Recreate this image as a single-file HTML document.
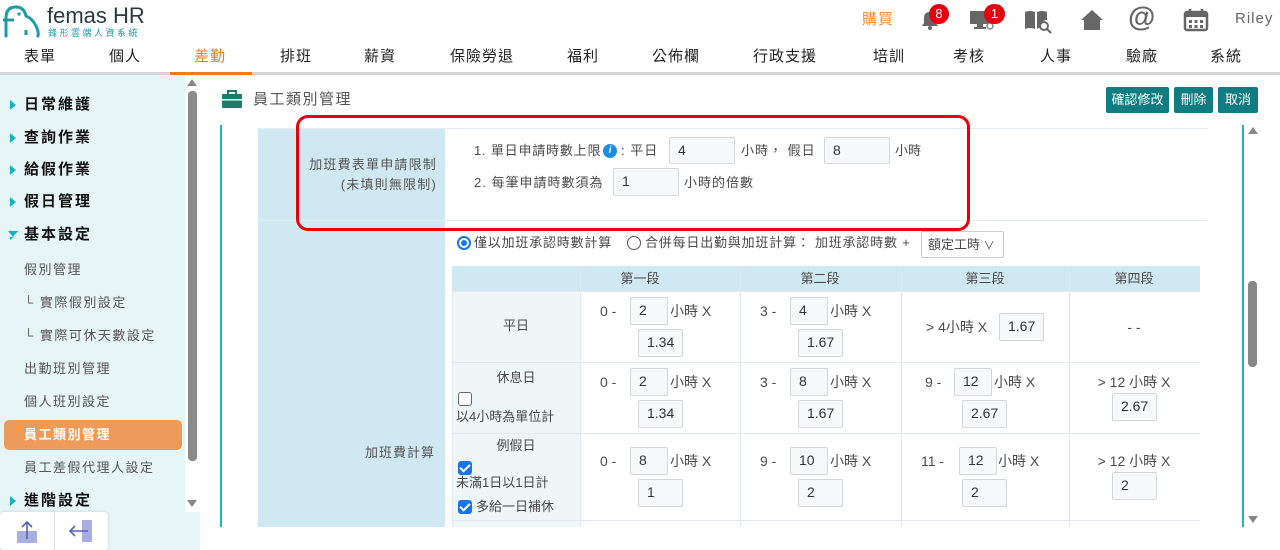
<!DOCTYPE html>
<html><head><meta charset="utf-8">
<style>
*{box-sizing:border-box;margin:0;padding:0}
body{width:1280px;height:550px;overflow:hidden;background:#fff;font-family:"Liberation Sans","Noto Sans CJK TC",sans-serif;color:#4a4a4a;position:relative;font-size:14px}
.a{position:absolute;white-space:nowrap;line-height:18px}
.nav{position:absolute;top:47px;font-size:15px;color:#222;letter-spacing:1px;transform:translateX(-50%);line-height:20px}
.sb{position:absolute;left:24px;font-size:15px;color:#111;letter-spacing:2px;font-weight:bold;line-height:20px}
.sb:before{content:"";position:absolute;left:-14px;top:5px;border-left:6px solid #1ab0c0;border-top:5px solid transparent;border-bottom:5px solid transparent}
.ss{position:absolute;left:24px;font-size:13px;color:#555;letter-spacing:1.5px;line-height:18px}
.in{position:absolute;background:#f7f8fa;border:1px solid #d3d6da;border-radius:2px;font-size:14px;color:#333;padding-left:8px;line-height:25px}
.btn{position:absolute;top:87px;height:26px;background:#0e7c80;color:#fff;font-size:13px;line-height:26px;text-align:center;border-radius:2px}
.cb{position:absolute;width:14px;height:14px;border-radius:3px}
.cb.on{background:#1a73e8}
.cb.on:after{content:"";position:absolute;left:4px;top:1px;width:4px;height:8px;border:solid #fff;border-width:0 2px 2px 0;transform:rotate(45deg)}
.cb.off{border:1.5px solid #666;background:#fff}
</style></head><body>
<!-- logo -->
<svg class="a" style="left:2px;top:4px" width="40" height="34" viewBox="0 0 40 34"><path d="M4 32 V14 Q4 3 14 3 Q22 3 24 12 Q30 14 34 22 Q37 28 36 32" fill="none" stroke="#1f9aa8" stroke-width="3" stroke-linecap="round"/><path d="M1 16 H12" stroke="#1f9aa8" stroke-width="3"/><circle cx="17" cy="10" r="1.6" fill="#1f9aa8"/><path d="M24 26 v5" stroke="#1f9aa8" stroke-width="3"/></svg>
<div class="a" style="left:47px;top:4px;font-size:22px;line-height:24px;color:#2a3a40;letter-spacing:0">femas HR</div>
<div class="a" style="left:48px;top:28px;font-size:9px;line-height:10px;color:#1f9aa8;letter-spacing:2.5px">鋒形雲端人資系統</div>
<!-- top icons -->
<div class="a" style="left:862px;top:11px;font-size:15px;color:#f08a2e;letter-spacing:1px">購買</div>
<svg class="a" style="left:918px;top:8px" width="24" height="24" viewBox="0 0 24 24"><path d="M4 18 H20 L18 15 V10 Q18 4 12 4 Q6 4 6 10 V15 Z" fill="#666"/><circle cx="12" cy="20" r="2" fill="#666"/></svg>
<div class="a" style="left:929px;top:4px;width:20px;height:20px;border-radius:10px;background:#e4000f;color:#fff;font-size:13px;text-align:center;line-height:20px">8</div>
<svg class="a" style="left:968px;top:8px" width="30" height="24" viewBox="0 0 30 24"><rect x="2" y="3" width="20" height="13" rx="1" fill="#666"/><rect x="9" y="16" width="6" height="4" fill="#666"/><rect x="6" y="19" width="12" height="2" fill="#666"/><circle cx="22" cy="18" r="3" fill="none" stroke="#888" stroke-width="1.5"/></svg>
<div class="a" style="left:984px;top:4px;width:21px;height:20px;border-radius:10px;background:#e4000f;color:#fff;font-size:13px;text-align:center;line-height:20px">1</div>
<svg class="a" style="left:1023px;top:8px" width="30" height="26" viewBox="0 0 30 26"><path d="M2 4 Q7 2 12 4 V21 Q7 19 2 21 Z M14 4 Q19 2 24 4 V12 Q18 12 17 19 L14 21 Z" fill="#666"/><circle cx="21" cy="18" r="4" fill="none" stroke="#666" stroke-width="2"/><path d="M24 21 L28 25" stroke="#666" stroke-width="2"/></svg>
<svg class="a" style="left:1079px;top:8px" width="26" height="24" viewBox="0 0 26 24"><path d="M13 2 L24 12 H21 V22 H5 V12 H2 Z" fill="#666"/></svg>
<div class="a" style="left:1128px;top:2px;font-size:28px;line-height:30px;color:#666;font-weight:bold">@</div>
<svg class="a" style="left:1183px;top:8px" width="26" height="24" viewBox="0 0 26 24"><rect x="2" y="4" width="22" height="18" rx="2" fill="none" stroke="#666" stroke-width="2.5"/><rect x="2" y="4" width="22" height="5" fill="#666"/><path d="M7 1v5M19 1v5" stroke="#666" stroke-width="2.5"/><g fill="#666"><rect x="6" y="12" width="3" height="3"/><rect x="11.5" y="12" width="3" height="3"/><rect x="17" y="12" width="3" height="3"/><rect x="6" y="17" width="3" height="3"/><rect x="11.5" y="17" width="3" height="3"/><rect x="17" y="17" width="3" height="3"/></g></svg>
<div class="a" style="left:1235px;top:10px;font-size:15px;color:#666;letter-spacing:1px">Riley</div>
<!-- nav -->
<div class="nav" style="left:40px">表單</div><div class="nav" style="left:125px">個人</div>
<div class="nav" style="left:210px;color:#f07a22">差勤</div><div class="nav" style="left:296px">排班</div>
<div class="nav" style="left:380px">薪資</div><div class="nav" style="left:482px">保險勞退</div>
<div class="nav" style="left:583px">福利</div><div class="nav" style="left:676px">公佈欄</div>
<div class="nav" style="left:785px">行政支援</div><div class="nav" style="left:889px">培訓</div>
<div class="nav" style="left:969px">考核</div><div class="nav" style="left:1056px">人事</div>
<div class="nav" style="left:1142px">驗廠</div><div class="nav" style="left:1226px">系統</div>
<div class="a" style="left:0;top:72px;width:1280px;height:3px;background:#d4d4d4"></div>
<div class="a" style="left:170px;top:72px;width:82px;height:3px;background:#f07a22"></div>
<!-- sidebar -->
<div class="a" style="left:0;top:75px;width:200px;height:475px;background:#e6f5f6"></div>
<div class="a" style="left:185px;top:75px;width:15px;height:437px;background:#fff"></div>
<div class="a" style="left:188px;top:91px;width:9px;height:370px;background:#8a8a8a;border-radius:4px"></div>
<div class="a" style="left:187px;top:79px;border-bottom:7px solid #888;border-left:5px solid transparent;border-right:5px solid transparent"></div>
<div class="a" style="left:187px;top:500px;border-top:7px solid #888;border-left:5px solid transparent;border-right:5px solid transparent"></div>
<div class="sb" style="top:95px">日常維護</div><div class="sb" style="top:128px">查詢作業</div>
<div class="sb" style="top:160px">給假作業</div><div class="sb" style="top:192px">假日管理</div>
<div class="sb" style="top:225px">基本設定</div>
<div class="a" style="left:8px;top:231px;border-top:6px solid #1ab0c0;border-left:5px solid transparent;border-right:5px solid transparent;z-index:2;background:#e6f5f6"></div>
<div class="ss" style="top:261px">假別管理</div><div class="ss" style="top:294px">└ 實際假別設定</div>
<div class="ss" style="top:327px">└ 實際可休天數設定</div><div class="ss" style="top:360px">出勤班別管理</div>
<div class="ss" style="top:393px">個人班別設定</div>
<div class="a" style="left:4px;top:420px;width:178px;height:30px;background:#ec9c58;border-radius:5px"></div>
<div class="ss" style="top:426px;color:#fff;font-weight:bold">員工類別管理</div>
<div class="ss" style="top:459px">員工差假代理人設定</div>
<div class="sb" style="top:491px">進階設定</div>
<div class="a" style="left:0;top:512px;width:108px;height:38px;background:#fff;border-radius:4px;box-shadow:0 0 3px rgba(0,0,0,.15)"></div>
<div class="a" style="left:54px;top:512px;width:1px;height:38px;background:#ddd"></div>
<svg class="a" style="left:16px;top:519px" width="24" height="26" viewBox="0 0 24 26"><rect x="1" y="12" width="20" height="12" fill="#a9aee0"/><path d="M11 20 V3 M6 8 L11 3 L16 8" stroke="#5560c8" stroke-width="1.6" fill="none"/></svg>
<svg class="a" style="left:68px;top:519px" width="26" height="24" viewBox="0 0 26 24"><rect x="14" y="1" width="10" height="22" fill="#a9aee0"/><path d="M2 12 H20 M7 7 L2 12 L7 17" stroke="#5560c8" stroke-width="1.6" fill="none"/></svg>
<!-- title -->
<svg class="a" style="left:222px;top:90px" width="20" height="18" viewBox="0 0 20 18"><rect x="0" y="4" width="20" height="14" rx="1" fill="#1c7c6a"/><rect x="6" y="1" width="8" height="4" fill="none" stroke="#1c7c6a" stroke-width="2"/><rect x="0" y="9" width="20" height="1.5" fill="#fff"/></svg>
<div class="a" style="left:253px;top:91px;font-size:15px;color:#555;letter-spacing:1.5px">員工類別管理</div>
<div class="btn" style="left:1106px;width:63px">確認修改</div>
<div class="btn" style="left:1174px;width:39px">刪除</div>
<div class="btn" style="left:1218px;width:40px">取消</div>
<!-- frame -->
<div class="a" style="left:220px;top:125px;width:2px;height:402px;background:#1bb6c4"></div>
<div class="a" style="left:1242px;top:125px;width:2px;height:402px;background:#1bb6c4"></div>
<div class="a" style="left:1248px;top:281px;width:9px;height:86px;background:#888;border-radius:4px"></div>
<div class="a" style="left:1248px;top:127px;border-bottom:7px solid #888;border-left:5px solid transparent;border-right:5px solid transparent"></div>
<div class="a" style="left:1248px;top:516px;border-top:7px solid #888;border-left:5px solid transparent;border-right:5px solid transparent"></div>
<div class="a" style="left:258px;top:128px;width:187px;height:399px;background:#cfe8f1"></div>
<div class="a" style="left:258px;top:220px;width:950px;height:1px;background:#e4eef2"></div>
<div class="a" style="left:258px;top:128px;width:950px;height:1px;background:#e4eef2"></div>
<div class="a" style="right:843px;top:155px;font-size:13px;color:#555;text-align:right;line-height:20px;letter-spacing:1.2px">加班費表單申請限制<br>(未填則無限制)</div>
<div class="a" style="left:474px;top:142px;font-size:13px;letter-spacing:.8px">1. 單日申請時數上限</div>
<div class="a" style="left:603px;top:144px;width:14px;height:14px;border-radius:7px;background:#1a8fe0;color:#fff;font-size:10px;line-height:14px;text-align:center;font-style:italic;font-weight:bold">i</div>
<div class="a" style="left:621px;top:142px;font-size:13px;letter-spacing:1px">: 平日</div>
<div class="in" style="left:669px;top:137px;width:66px;height:27px">4</div>
<div class="a" style="left:741px;top:142px;font-size:13px;letter-spacing:1px">小時， 假日</div>
<div class="in" style="left:824px;top:137px;width:66px;height:27px">8</div>
<div class="a" style="left:895px;top:142px;font-size:13px">小時</div>
<div class="a" style="left:474px;top:174px;font-size:13px;letter-spacing:1px">2. 每筆申請時數須為</div>
<div class="in" style="left:613px;top:168px;width:66px;height:28px">1</div>
<div class="a" style="left:684px;top:174px;font-size:13px;letter-spacing:1px">小時的倍數</div>
<div class="a" style="left:296px;top:115px;width:674px;height:116px;border:3px solid #e8000b;border-radius:12px"></div>
<div class="a" style="left:365px;top:444px;font-size:13px;color:#555;letter-spacing:1px">加班費計算</div>
<!-- radio row -->
<div class="a" style="left:457px;top:236px;width:14px;height:14px;border-radius:7px;border:2px solid #1a73e8"><div style="position:absolute;left:2px;top:2px;width:6px;height:6px;border-radius:3px;background:#1a73e8"></div></div>
<div class="a" style="left:474px;top:234px;font-size:13px;letter-spacing:.8px">僅以加班承認時數計算</div>
<div class="a" style="left:627px;top:236px;width:14px;height:14px;border-radius:7px;border:1.5px solid #555"></div>
<div class="a" style="left:645px;top:234px;font-size:13px;letter-spacing:.8px">合併每日出勤與加班計算： 加班承認時數 +</div>
<div class="a" style="left:921px;top:231px;width:83px;height:27px;border:1px solid #ccc;border-radius:2px;font-size:13px;line-height:25px;padding-left:6px">額定工時 <span style="font-size:11px">&#x2228;</span></div>
<!-- inner table -->
<div class="a" style="left:452px;top:266px;width:748px;height:25px;background:#cfe8f1"></div>
<div class="a" style="left:452px;top:291px;width:128px;height:236px;background:#eef6f8"></div>
<div class="a" style="left:580px;top:266px;width:1px;height:261px;background:#e2e8ee"></div>
<div class="a" style="left:740px;top:266px;width:1px;height:261px;background:#e2e8ee"></div>
<div class="a" style="left:901px;top:266px;width:1px;height:261px;background:#e2e8ee"></div>
<div class="a" style="left:1069px;top:266px;width:1px;height:261px;background:#e2e8ee"></div>
<div class="a" style="left:452px;top:291px;width:748px;height:1px;background:#e2e8ee"></div>
<div class="a" style="left:452px;top:362px;width:748px;height:1px;background:#e2e8ee"></div>
<div class="a" style="left:452px;top:433px;width:748px;height:1px;background:#e2e8ee"></div>
<div class="a" style="left:452px;top:520px;width:748px;height:1px;background:#e2e8ee"></div>
<div class="a" style="left:452px;top:291px;width:1px;height:236px;background:#e2e8ee"></div>
<div class="a" style="left:640px;top:270px;font-size:13px;transform:translateX(-50%)">第一段</div>
<div class="a" style="left:820px;top:270px;font-size:13px;transform:translateX(-50%)">第二段</div>
<div class="a" style="left:985px;top:270px;font-size:13px;transform:translateX(-50%)">第三段</div>
<div class="a" style="left:1134px;top:270px;font-size:13px;transform:translateX(-50%)">第四段</div>
<!-- row labels -->
<div class="a" style="left:516px;top:317px;font-size:13px;transform:translateX(-50%)">平日</div>
<div class="a" style="left:516px;top:369px;font-size:13px;transform:translateX(-50%)">休息日</div>
<div class="cb off" style="left:458px;top:392px"></div>
<div class="a" style="left:456px;top:408px;font-size:13px">以4小時為單位計</div>
<div class="a" style="left:516px;top:437px;font-size:13px;transform:translateX(-50%)">例假日</div>
<div class="cb on" style="left:458px;top:461px"></div>
<div class="a" style="left:456px;top:474px;font-size:13px">未滿1日以1日計</div>
<div class="cb on" style="left:458px;top:500px"></div>
<div class="a" style="left:476px;top:498px;font-size:13px">多給一日補休</div>
<!-- col1 -->
<div class="a" style="left:600px;top:302px">0 -</div><div class="in" style="left:630px;top:297px;width:38px;height:28px">2</div><div class="a" style="left:670px;top:302px">小時 X</div><div class="in" style="left:638px;top:329px;width:45px;height:28px">1.34</div>
<div class="a" style="left:600px;top:373px">0 -</div><div class="in" style="left:630px;top:368px;width:38px;height:28px">2</div><div class="a" style="left:670px;top:373px">小時 X</div><div class="in" style="left:638px;top:400px;width:45px;height:28px">1.34</div>
<div class="a" style="left:600px;top:452px">0 -</div><div class="in" style="left:630px;top:447px;width:38px;height:28px">8</div><div class="a" style="left:670px;top:452px">小時 X</div><div class="in" style="left:638px;top:479px;width:45px;height:28px">1</div>
<!-- col2 -->
<div class="a" style="left:760px;top:302px">3 -</div><div class="in" style="left:790px;top:297px;width:38px;height:28px">4</div><div class="a" style="left:830px;top:302px">小時 X</div><div class="in" style="left:798px;top:329px;width:45px;height:28px">1.67</div>
<div class="a" style="left:760px;top:373px">3 -</div><div class="in" style="left:790px;top:368px;width:38px;height:28px">8</div><div class="a" style="left:830px;top:373px">小時 X</div><div class="in" style="left:798px;top:400px;width:45px;height:28px">1.67</div>
<div class="a" style="left:760px;top:452px">9 -</div><div class="in" style="left:790px;top:447px;width:38px;height:28px">10</div><div class="a" style="left:830px;top:452px">小時 X</div><div class="in" style="left:798px;top:479px;width:45px;height:28px">2</div>
<!-- col3 -->
<div class="a" style="left:926px;top:318px">&gt; 4小時 X</div><div class="in" style="left:999px;top:313px;width:45px;height:28px">1.67</div>
<div class="a" style="left:925px;top:373px">9 -</div><div class="in" style="left:954px;top:368px;width:38px;height:28px">12</div><div class="a" style="left:994px;top:373px">小時 X</div><div class="in" style="left:962px;top:400px;width:45px;height:28px">2.67</div>
<div class="a" style="left:921px;top:452px">11 -</div><div class="in" style="left:959px;top:447px;width:38px;height:28px">12</div><div class="a" style="left:998px;top:452px">小時 X</div><div class="in" style="left:962px;top:479px;width:45px;height:28px">2</div>
<!-- col4 -->
<div class="a" style="left:1134px;top:318px;transform:translateX(-50%)">- -</div>
<div class="a" style="left:1134px;top:373px;transform:translateX(-50%)">&gt; 12 小時 X</div><div class="in" style="left:1112px;top:393px;width:45px;height:28px">2.67</div>
<div class="a" style="left:1134px;top:452px;transform:translateX(-50%)">&gt; 12 小時 X</div><div class="in" style="left:1112px;top:472px;width:45px;height:28px">2</div>
<div class="a" style="left:200px;top:527px;width:1080px;height:23px;background:#fff"></div>
</body></html>
